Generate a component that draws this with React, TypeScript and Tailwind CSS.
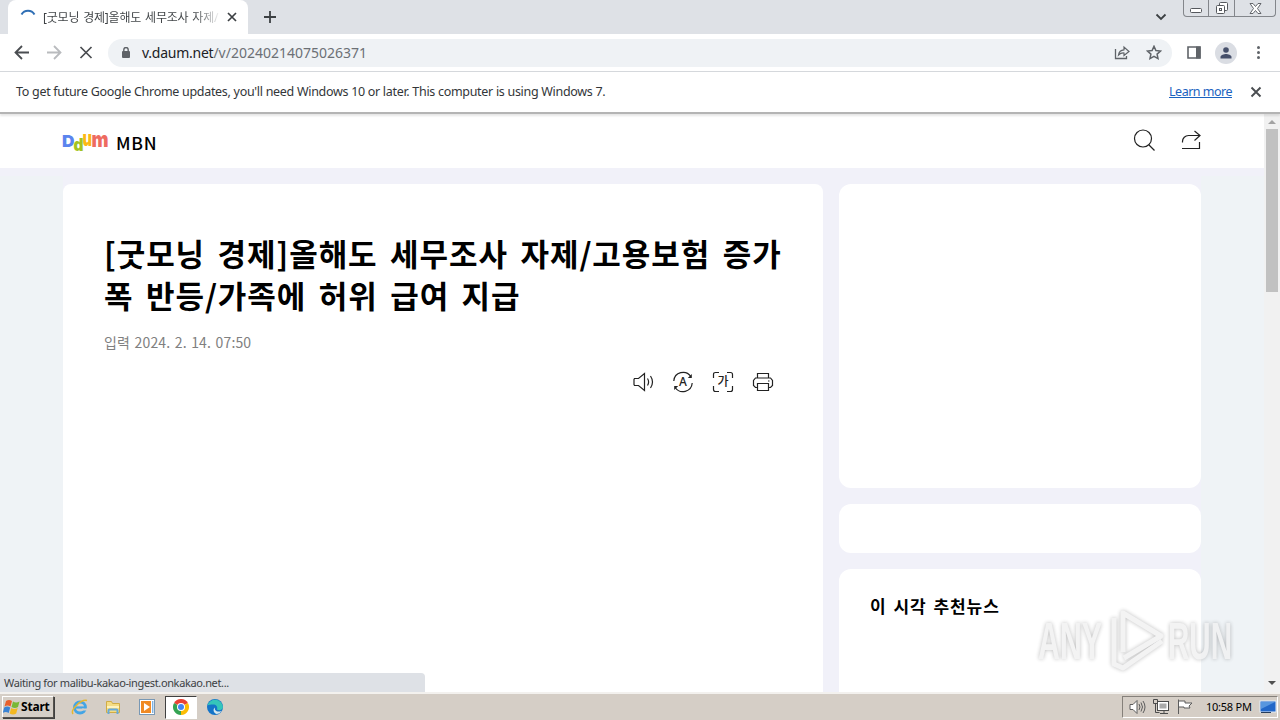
import type { ReactNode } from 'react'

const TAHOMA = "font-['Noto_Sans','Noto_Sans_CJK_KR',sans-serif]"
const KOREAN = "font-['Noto_Sans_CJK_KR','Noto_Sans',sans-serif]"

function Icon({ size = 20, className = '', children }: { size?: number; className?: string; children: ReactNode }) {
  return (
    <svg
      width={size}
      height={size}
      viewBox={`0 0 ${size} ${size}`}
      fill="none"
      stroke="currentColor"
      className={`shrink-0 ${className}`}
    >
      {children}
    </svg>
  )
}

function TabStrip() {
  return (
    <div className="flex h-[34px] shrink-0 bg-[#dee1e6] text-[#3c4043]">
      <div className="ml-2 flex h-full w-[240px] items-center rounded-t-lg bg-white pr-2">
        <Icon size={16} className="ml-3">
          <path d="M1.500 5.500A7.500 7.500 0 0 1 14.500 5.500" stroke="#2f6fb5" strokeWidth="2" />
        </Icon>
        <span className="ml-[7px] w-[178px] overflow-hidden bg-linear-to-r from-[#3c4043] from-85% to-transparent bg-clip-text pt-px text-[12px] tracking-[-0.2px] whitespace-nowrap text-transparent [word-spacing:1px]">
          [굿모닝 경제]올해도 세무조사 자제/
        </span>
        <Icon size={14} className="ml-[4px]">
          <path d="M3 3l8 8M11 3l-8 8" strokeWidth="1.700" />
        </Icon>
      </div>
      <Icon size={14} className="mt-[10px] ml-[15px]">
        <path d="M7 1v12M1 7h12" strokeWidth="1.800" />
      </Icon>
      <div className="grow" />
      <Icon size={12} className="mt-[11px] mr-[16px]">
        <path d="M1.500 3.500L6 8l4.500-4.500" strokeWidth="1.800" />
      </Icon>
      <div className="mr-1 flex h-[17px] w-[93px] rounded-b-[4px] border border-t-0 border-[#83868b] text-[#55585d]">
        <div className="flex w-[25px] items-center justify-center border-r border-[#83868b]">
          <Icon size={12}>
            <rect x=".5" y="6.500" width="11" height="4" rx="1" fill="#fff" />
          </Icon>
        </div>
        <div className="flex w-[26px] items-center justify-center border-r border-[#83868b]">
          <Icon size={14}>
            <rect x="4.500" y="1.500" width="8" height="8" rx="1" fill="#fff" />
            <rect x="1.500" y="4.500" width="8" height="8" rx="1" fill="#fff" />
            <rect x="4.500" y="7.500" width="2" height="2" />
          </Icon>
        </div>
        <div className="flex grow items-center justify-center">
          <Icon size={13}>
            <path
              d="M1 1.500h3l2.500 3 2.500-3h3L8.500 6.500l3.500 5H9L6.500 8.500 4 11.500H1l3.500-5z"
              fill="#fff"
              strokeWidth=".9"
            />
          </Icon>
        </div>
      </div>
    </div>
  )
}

function Toolbar() {
  return (
    <div className="flex h-[38px] shrink-0 items-center border-b border-[#d5d8dc] bg-white text-[#5f6368]">
      <Icon size={16} className="ml-[14px] text-[#4a4d51]">
        <path d="M15 7.500H2M8 1L1.500 7.500 8 14" strokeWidth="1.800" />
      </Icon>
      <Icon size={16} className="ml-[16px] text-[#b9bbbe]">
        <path d="M1 7.500h13M8 1l6.500 6.500L8 14" strokeWidth="1.800" />
      </Icon>
      <Icon size={16} className="ml-[16px] text-[#4a4d51]">
        <path d="M2.500 2l11 11M13.500 2l-11 11" strokeWidth="1.700" />
      </Icon>
      <div className="ml-[14px] flex h-[28px] w-[1064px] items-center rounded-full bg-[#eff2f5]">
        <Icon size={12} className="ml-[12px]">
          <rect x="2" y="4" width="8" height="7" rx="1" fill="#5f6368" stroke="none" />
          <path d="M3.800 4.500V2.700a2.200 2.200 0 0 1 4.400 0v1.800" strokeWidth="1.400" />
        </Icon>
        <span className="ml-[10px] grow text-[14px] leading-5 text-[#6c7075]">
          <span className="tracking-[-0.25px] text-[#202124]">v.daum.net</span>
          <span>/v/20240214075026371</span>
        </span>
        <Icon size={16}>
          <path d="M1.500 4v9.500h11V11" strokeWidth="1.300" />
          <path d="M4.500 10C5 6.500 7 5 10 4.800V2l5 4.500-5 4V8C7.500 7.800 6 8.500 4.500 10z" strokeWidth="1.200" />
        </Icon>
        <Icon size={16} className="mr-[10px] ml-[16px]">
          <path d="M8 1.300l1.900 4.200 4.600.5-3.400 3.100.9 4.500L8 11.300l-4 2.300.9-4.500L1.500 6l4.600-.5z" strokeWidth="1.500" />
        </Icon>
      </div>
      <Icon size={14} className="ml-[15px]">
        <path d="M1 1h12v11H1z" strokeWidth="1.600" />
        <path d="M9 .5h4.500v12H9z" fill="currentColor" stroke="none" />
      </Icon>
      <div className="ml-[14px] flex size-[22px] items-center justify-center rounded-full bg-[#dadde3]">
        <Icon size={14} className="text-[#46506b]">
          <circle cx="7" cy="4" r="2.800" fill="currentColor" stroke="none" />
          <path d="M1.500 12.500V11C1.500 9 5 8 7 8s5.500 1 5.500 3v1.500z" fill="currentColor" stroke="none" />
        </Icon>
      </div>
      <Icon size={16} className="ml-[13px]">
        <g fill="currentColor" stroke="none">
          <circle cx="8.500" cy="2.500" r="1.500" />
          <circle cx="8.500" cy="7.500" r="1.500" />
          <circle cx="8.500" cy="12.500" r="1.500" />
        </g>
      </Icon>
    </div>
  )
}

function InfoBar() {
  return (
    <div className="relative flex h-[42px] shrink-0 items-center border-b-2 border-[#b4b4b4] bg-white pr-[17px] pl-4 text-[12.5px] tracking-[-0.3px] text-[#333639] shadow-[0_2px_2px_rgba(0,0,0,0.1)]">
      <span className="grow">
        To get future Google Chrome updates, you'll need Windows 10 or later. This computer is using Windows 7.
      </span>
      <span className="mr-[17px] tracking-[-0.5px] text-[#1a62c0] underline">Learn more</span>
      <Icon size={14} className="text-[#4a4d51]">
        <path d="M2.500 2.500l9 9M11.500 2.500l-9 9" strokeWidth="1.900" />
      </Icon>
    </div>
  )
}

function DaumLogo() {
  return (
    <svg
      width="48"
      height="28"
      viewBox="0 0 48 28"
      className="shrink-0 overflow-visible font-['Inter',sans-serif] font-black"
    >
      <text x="-1" y="18" fontSize="16.500" fill="#5b84ee" textLength="12.500" lengthAdjust="spacingAndGlyphs">D</text>
      <text x="10.500" y="21.500" fontSize="17" fill="#a5c31e" textLength="10" lengthAdjust="spacingAndGlyphs">d</text>
      <text x="19.500" y="16.500" fontSize="22" fill="#fcb813" textLength="9.500" lengthAdjust="spacingAndGlyphs">u</text>
      <text x="28.500" y="18" fontSize="22" fill="#ee6b60" textLength="17" lengthAdjust="spacingAndGlyphs">m</text>
    </svg>
  )
}

function PageHeader() {
  return (
    <header className="flex h-[54px] shrink-0 bg-white px-[63px] text-[#222]">
      <div className="mt-[15px]">
        <DaumLogo />
      </div>
      <span className="mt-[15px] ml-[5px] grow text-[17.500px] leading-[28px] font-medium tracking-[0.8px] text-black">
        MBN
      </span>
      <Icon size={24} className="mt-[14px]">
        <circle cx="12" cy="10.500" r="8.500" strokeWidth="1.200" />
        <path d="M18 17l5.500 5.500" strokeWidth="1.200" />
      </Icon>
      <Icon size={24} className="mt-[14px] ml-[22px]">
        <path d="M5.500 14.500v-1a6 6 0 0 1 6-6H23M17.500 3L23 7.500l-5.500 5M5 20.500h17.500V14" strokeWidth="1.200" />
      </Icon>
    </header>
  )
}

function ArticleTools() {
  return (
    <div className="mt-[17px] flex gap-4 pl-[527px] text-[#222]">
      <Icon size={24}>
        <path d="M3.500 8.500h4l6-5v17l-6-5h-4l-.5-1v-5z" strokeWidth="1.200" />
        <path d="M16.500 8.500q2.200 3.500 0 7M19.500 6q4 6 0 12" strokeWidth="1.200" />
      </Icon>
      <Icon size={24}>
        <path d="M2.800 11A9.300 9.300 0 0 1 19.800 6.500M21.200 13A9.300 9.300 0 0 1 4.200 17.500" strokeWidth="1.200" />
        <path d="M20.800 4v4h-4zM3.200 20v-4h4z" fill="currentColor" stroke="none" />
        <text x="12" y="16" fontSize="12" textAnchor="middle" fill="currentColor" stroke="none" className="font-['Noto_Sans'] font-medium">A</text>
      </Icon>
      <Icon size={24}>
        <path d="M2.500 8V4.500q0-2 2-2H8M16 2.500h3.500q2 0 2 2V8M21.500 16v3.500q0 2-2 2H16M8 21.500H4.500q-2 0-2-2V16" strokeWidth="1.200" />
        <text x="12" y="16" fontSize="12" textAnchor="middle" fill="currentColor" stroke="none" className="font-['Noto_Sans_CJK_KR'] font-medium">가</text>
      </Icon>
      <Icon size={24}>
        <path d="M6.500 8V3.500h11V8M6 17.500H4.500l-2-2v-5l2-2.500h15l2 2.500v5l-2 2H18M6.500 13.500h11v7h-11zM17 11h1.500" strokeWidth="1.200" />
      </Icon>
    </div>
  )
}

function Watermark() {
  return (
    <svg
      width="204"
      height="70"
      viewBox="0 0 204 70"
      className="absolute top-[605px] left-[1034px] overflow-visible opacity-85 drop-shadow-[0_0_2px_rgba(0,0,0,0.3)]"
    >
      <g fill="#f1f1f2" fontSize="51" fontWeight="700" className="font-['Liberation_Sans',sans-serif]">
        <text x="4" y="54" textLength="64" lengthAdjust="spacingAndGlyphs">ANY</text>
        <text x="134" y="54" textLength="64" lengthAdjust="spacingAndGlyphs">RUN</text>
      </g>
      <g fill="none" stroke="#f1f1f2" strokeWidth="5" strokeLinejoin="round">
        <path d="M89 47V8l38 23-37 22" />
        <path d="M80 13v46l9 4 39-27" />
      </g>
    </svg>
  )
}

function Page() {
  return (
    <div className="flex min-h-0 grow">
      <div className={`flex min-w-0 grow flex-col bg-[#f1f1f9] ${KOREAN}`}>
        <PageHeader />
        <div className="flex min-h-0 grow">
          <div className="mt-2 w-[63px] shrink-0 bg-[#eff3f6]" />
          <main className="flex min-h-0 grow gap-4 overflow-hidden pt-4">
            <article className="h-[600px] w-[760px] shrink-0 rounded-t-lg bg-white px-[41px] pt-[48px]">
              <h1 className="text-[31px] leading-[42px] font-bold tracking-[0.95px] whitespace-nowrap text-black [word-spacing:4.5px]">
                <span className="block">[굿모닝 경제]올해도 세무조사 자제/고용보험 증가</span>
                <span className="block">폭 반등/가족에 허위 급여 지급</span>
              </h1>
              <p className="mt-[16px] text-[14px] leading-5 tracking-[0.15px] text-[#808080] [word-spacing:1.2px]">
                입력 2024. 2. 14. 07:50
              </p>
              <div className="pt-px">
                <ArticleTools />
              </div>
            </article>
            <aside className="flex w-[362px] shrink-0 flex-col gap-4">
              <section className="h-[304px] shrink-0 rounded-xl bg-white" />
              <section className="h-[49px] shrink-0 rounded-xl bg-white" />
              <section className="h-[200px] shrink-0 rounded-xl bg-white px-[31px] pt-[24px]">
                <h2 className="text-[17px] leading-[26px] font-bold tracking-[0.95px] text-black [word-spacing:2px]">
                  이 시각 추천뉴스
                </h2>
              </section>
            </aside>
          </main>
          <div className="mt-2 w-[63px] shrink-0 bg-[#eff3f6]" />
        </div>
      </div>
      <div className="flex w-4 shrink-0 flex-col items-center bg-[#f1f1f1]">
        <Icon size={8} className="mt-[4px] text-[#a3a3a3]">
          <path d="M0 6l4-4 4 4z" fill="currentColor" stroke="none" />
        </Icon>
        <div className="mt-[3px] h-[163px] w-[12px] bg-[#c1c1c1]" />
        <div className="grow" />
        <Icon size={8} className="mb-[5px] text-[#505050]">
          <path d="M0 2l4 4 4-4z" fill="currentColor" stroke="none" />
        </Icon>
      </div>
    </div>
  )
}

function Taskbar() {
  return (
    <div className="flex h-[28px] shrink-0 items-center border-t-2 border-t-[#f3f1ee] bg-[#d5cec6] text-[11px] text-black">
      <div className="ml-[2px] flex h-[22px] w-[52px] items-center border border-t-white border-r-[#55514b] border-b-[#55514b] border-l-white shadow-[1px_1px_0_#404040]">
        <Icon size={18}>
          <g stroke="none">
            <path d="M3 3q3-2 6 0L7.500 8.500q-3-2-6 0z" fill="#e8602c" />
            <path d="M10 3.500q3 2 6.500 0L15 9q-3 2-6.500 0z" fill="#79b836" />
            <path d="M1.200 9.500q3-2 6 0L5.700 15q-3-2-6 0z" fill="#3a83d4" />
            <path d="M8.200 10q3 2 6.500 0l-1.500 5.500q-3 2-6.500 0z" fill="#f4b820" />
          </g>
        </Icon>
        <span className="text-[12px] font-bold tracking-[-0.2px]">Start</span>
      </div>
      <Icon size={18} className="ml-[17px]">
        <circle cx="9" cy="9.500" r="5.500" stroke="#43a5e5" strokeWidth="2.800" />
        <path d="M4 9.500h10" stroke="#43a5e5" strokeWidth="2.200" />
        <path d="M11 11.500h6" stroke="#d5cec6" strokeWidth="2" />
        <path d="M2 16C-1 12 10 1 16 2.500" stroke="#e6b72e" strokeWidth="1.500" />
      </Icon>
      <Icon size={18} className="ml-[15px]">
        <path d="M2.500 3.500h5l1 2h7v9h-13z" fill="#f4dc83" stroke="#d1ac45" />
        <path d="M3 8h12v2H3z" fill="#fff3bd" stroke="none" />
        <path d="M4.500 16v-3.500q0-1 1-1h7q1 0 1 1V16" stroke="#66a9d8" strokeWidth="2" />
      </Icon>
      <Icon size={18} className="ml-[16px]">
        <rect x="1.500" y="1.500" width="15" height="15" fill="#fff" stroke="#7898b5" />
        <rect x="3" y="3" width="10" height="12" fill="#f08a24" stroke="none" />
        <path d="M6 5l6 4-6 4z" fill="#fff" stroke="none" />
        <path d="M14.800 3v12" stroke="#4b93d6" />
      </Icon>
      <div className="ml-[9px] flex h-[23px] w-[32px] items-center justify-center border border-t-[#404040] border-r-white border-b-white border-l-[#404040] bg-white">
        <svg width="16" height="16" viewBox="0 0 16 16" className="shrink-0">
          <path d="M8 8L1.070 4A8 8 0 0 1 14.930 4z" fill="#e94235" />
          <path d="M8 8L14.930 4A8 8 0 0 1 8 16z" fill="#fbbc04" />
          <path d="M8 8v8A8 8 0 0 1 1.070 4z" fill="#34a353" />
          <circle cx="8" cy="8" r="4" fill="#fff" />
          <circle cx="8" cy="8" r="3" fill="#4285f4" />
        </svg>
      </div>
      <Icon size={18} className="ml-[9px]">
        <g stroke="none">
          <circle cx="9" cy="9" r="8" fill="#1474c8" />
          <path d="M1.500 7A8 8 0 0 1 17 9c0 3-4 4-6 2.500 1-3-1-5-4-5-2.500 0-4 .5-5.500.5z" fill="#35c5ba" />
          <path d="M9 9.500c-1 3 2 5 6.500 3.500-1 2-3 3-5 3-3-1-4-5-1.500-6.500z" fill="#d7e8ee" />
        </g>
      </Icon>
      <div className="grow" />
      <div className="mr-[2px] flex h-[22px] w-[156px] items-center border border-t-[#85807a] border-r-white border-b-white border-l-[#85807a]">
        <Icon size={18} className="ml-[5px] text-[#5c5c5c]">
          <path d="M2 6.500h3l4-4v13l-4-4H2z" fill="#fff" />
          <path d="M11 6q2 3 0 6M13 4.500q3 4.500 0 9M15 3q4 6 0 12" />
        </Icon>
        <Icon size={18} className="ml-[6px] text-[#4b4b4b]">
          <rect x="5.500" y="3.500" width="11" height="9" fill="#fff" />
          <rect x="7.500" y="5.500" width="7" height="5" fill="#aaa" stroke="none" />
          <path d="M1.500 1.500h4v4h-4zM3.500 5.500v9h4M8 15.500h8M12 12.500v3" />
        </Icon>
        <Icon size={18} className="ml-[6px] text-[#5c5c5c]">
          <path d="M2.500 16V1.500M3 3h6v2h7l-3 3 1 2H8V9H3" fill="#fff" />
        </Icon>
        <span className="ml-[12px] w-[46px] text-[11px] tracking-[-0.25px] whitespace-nowrap">10:58 PM</span>
        <Icon size={18} className="ml-[7px]">
          <rect x="1" y="3" width="16" height="11" fill="#2267c8" stroke="#e4edf8" />
          <path d="M2 4h14L2 11z" fill="#5796df" stroke="none" />
          <path d="M2 14.500h10" stroke="#263d5c" />
        </Icon>
      </div>
    </div>
  )
}

export default function App() {
  return (
    <div className={`relative flex h-[720px] w-[1280px] flex-col overflow-hidden bg-white ${TAHOMA}`}>
      <TabStrip />
      <Toolbar />
      <InfoBar />
      <Page />
      <Taskbar />
      <div className="absolute top-[673px] left-0 flex h-[19px] w-[425px] items-center rounded-tr-[4px] bg-[#dee1e6] pt-px pl-1 text-[11px] tracking-[-0.36px] text-[#3c4043]">
        Waiting for malibu-kakao-ingest.onkakao.net...
      </div>
      <Watermark />
    </div>
  )
}
